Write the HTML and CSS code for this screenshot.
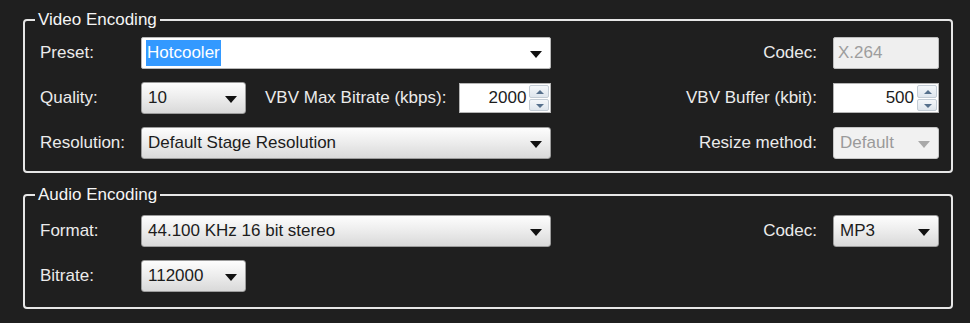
FILE: index.html
```html
<!DOCTYPE html>
<html lang="en">
<head>
    <meta charset="UTF-8">
    <title>Encoding Settings</title>
    <link rel="stylesheet" href="styles.css">
</head>
<body>
    <div class="panel">
        <fieldset class="group video">
            <legend>Video Encoding</legend>

            <div class="row">
                <label class="lbl">Preset:</label>
                <div class="combo edit wide"><span class="sel">Hotcooler</span><i class="arrow"></i></div>
                <div class="side">
                    <label class="rlbl">Codec:</label>
                    <div class="textbox disabled">X.264</div>
                </div>
            </div>

            <div class="row">
                <label class="lbl">Quality:</label>
                <div class="combo small"><span>10</span><i class="arrow"></i></div>
                <label class="mid-lbl">VBV Max Bitrate (kbps):</label>
                <div class="spin narrow">
                    <span class="val">2000</span>
                    <div class="btns"><b class="up"></b><b class="down"></b></div>
                </div>
                <div class="side">
                    <label class="rlbl">VBV Buffer (kbit):</label>
                    <div class="spin">
                        <span class="val">500</span>
                        <div class="btns"><b class="up"></b><b class="down"></b></div>
                    </div>
                </div>
            </div>

            <div class="row">
                <label class="lbl">Resolution:</label>
                <div class="combo wide"><span>Default Stage Resolution</span><i class="arrow"></i></div>
                <div class="side">
                    <label class="rlbl">Resize method:</label>
                    <div class="combo disabled"><span>Default</span><i class="arrow"></i></div>
                </div>
            </div>
        </fieldset>

        <fieldset class="group audio">
            <legend>Audio Encoding</legend>

            <div class="row">
                <label class="lbl">Format:</label>
                <div class="combo wide"><span>44.100 KHz 16 bit stereo</span><i class="arrow"></i></div>
                <div class="side">
                    <label class="rlbl">Codec:</label>
                    <div class="combo"><span>MP3</span><i class="arrow"></i></div>
                </div>
            </div>

            <div class="row">
                <label class="lbl">Bitrate:</label>
                <div class="combo small"><span>112000</span><i class="arrow"></i></div>
            </div>
        </fieldset>
    </div>
</body>
</html>
```

FILE: styles.css
```css
* {
    margin: 0;
    padding: 0;
    box-sizing: border-box;
    font-family: 'Liberation Sans', Arial, sans-serif;
}

body {
    background: #1f1f1f;
    color: #ebebeb;
    font-size: 17px;
}

.panel {
    padding: 10px 17px 0 23px;
}

.group {
    border: 2px solid #e6e6e6;
    border-radius: 4px;
    padding: 7px 12px 12px 15px;
    width: 930px;
}

.group.audio {
    margin-top: 12px;
    padding-top: 10px;
    padding-bottom: 15px;
}

.group legend {
    line-height: 20px;
    padding: 0 3px;
    margin-left: -5px;
    color: #f5f5f5;
}

.row {
    display: flex;
    align-items: center;
    height: 32px;
    margin-bottom: 13px;
}

.row:last-child {
    margin-bottom: 0;
}

.lbl {
    width: 101px;
}

.side {
    margin-left: auto;
    display: flex;
    align-items: center;
}

.rlbl {
    margin-right: 16px;
}

.mid-lbl {
    margin-left: 19px;
    margin-right: 13px;
}

/* combo boxes */
.combo {
    position: relative;
    display: flex;
    align-items: center;
    width: 106px;
    height: 32px;
    padding-left: 6px;
    color: #1c1c1c;
    background: linear-gradient(#fdfdfd, #ececec 50%, #d9d9d9);
    border: 1px solid #9c9c9c;
    border-radius: 3px;
}

.combo.wide {
    width: 410px;
}

.combo.small {
    width: 105px;
}

.combo.edit {
    background: #fff;
    border-color: #b8b8b8;
    border-radius: 2px;
    padding-left: 4px;
}

.combo .sel {
    background: #3399ff;
    color: #fff;
    padding: 3px 1px;
}

.arrow {
    position: absolute;
    right: 8px;
    top: 13px;
    border-top: 7px solid #111;
    border-left: 6px solid transparent;
    border-right: 6px solid transparent;
}

.combo.disabled {
    background: #f1f1f1;
    border-color: #c6c6c6;
    color: #9a9a9a;
}

.combo.disabled .arrow {
    border-top-color: #a8a8a8;
}

/* plain text box */
.textbox {
    width: 106px;
    height: 32px;
    display: flex;
    align-items: center;
    padding-left: 4px;
    border: 1px solid #bdbdbd;
    border-radius: 2px;
    background: #fff;
    color: #222;
}

.textbox.disabled {
    background: #efefef;
    color: #9d9d9d;
}

/* numeric spinners */
.spin {
    display: flex;
    width: 106px;
    height: 30px;
    background: #fff;
    border: 1px solid #b5b5b5;
    color: #1c1c1c;
}

.spin.narrow {
    width: 92px;
}

.spin .val {
    flex: 1;
    text-align: right;
    line-height: 28px;
    padding-right: 2px;
}

.spin .btns {
    width: 22px;
    display: flex;
    flex-direction: column;
    padding: 1px;
    gap: 1px;
}

.spin .btns b {
    flex: 1;
    position: relative;
    background: linear-gradient(#f4f7fa, #dfe6ed);
    border: 1px solid #c3ccd5;
    border-radius: 2px;
}

.spin .btns b::after {
    content: '';
    position: absolute;
    left: 6px;
    top: 4px;
    border-left: 4px solid transparent;
    border-right: 4px solid transparent;
}

.spin .btns .up::after {
    border-bottom: 4px solid #56708c;
}

.spin .btns .down::after {
    border-top: 4px solid #56708c;
}
```
